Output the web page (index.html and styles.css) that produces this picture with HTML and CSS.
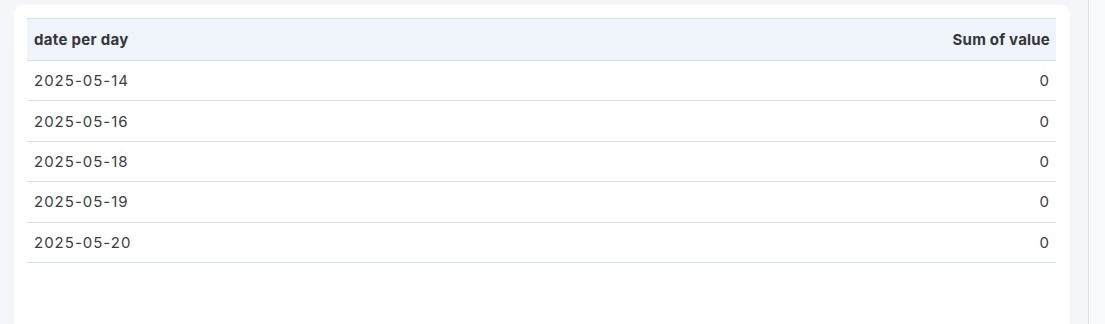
FILE: index.html
```html
<!DOCTYPE html>
<html>
<head>
<meta charset="utf-8">
<link rel="stylesheet" href="styles.css">
</head>
<body>
<div class="page">
  <div class="main">
    <div class="card">
      <table class="grid">
        <thead>
          <tr><th class="left">date per day</th><th class="right">Sum of value</th></tr>
        </thead>
        <tbody>
          <tr><td class="left">2025-05-14</td><td class="right">0</td></tr>
          <tr><td class="left">2025-05-16</td><td class="right">0</td></tr>
          <tr><td class="left">2025-05-18</td><td class="right">0</td></tr>
          <tr><td class="left">2025-05-19</td><td class="right">0</td></tr>
          <tr><td class="left">2025-05-20</td><td class="right">0</td></tr>
        </tbody>
      </table>
    </div>
  </div>
  <div class="side"></div>
</div>
</body>
</html>
```
FILE: styles.css
```css
html, body {
  margin: 0;
  padding: 0;
  height: 100%;
  overflow: hidden;
}
body {
  background: #f5f6fa;
  font-family: Inter, "Noto Sans", sans-serif;
  color: #2f3134;
}
.page {
  display: flex;
  height: 324px;
}
.main {
  width: 1088px;
  padding: 5px 18px 0 14px;
  box-sizing: border-box;
}
.card {
  background: #ffffff;
  border-radius: 9px 9px 0 0;
  height: 319px;
  padding: 13px 14px 0 13px;
  box-sizing: border-box;
}
.side {
  flex: 1;
  border-left: 1px solid #dde1ea;
  background: #f9fafc;
}
.grid {
  width: 100%;
  border-collapse: collapse;
}
.grid th {
  background: #eff3fa;
  font-weight: 700;
  font-size: 15px;
  letter-spacing: 0.3px;
  line-height: 21px;
  padding: 10px 7px;
  border-top: 1px solid #d9dee8;
  border-bottom: 1px solid #d9dee8;
  color: #33363a;
}
.grid th.right {
  padding-right: 6px;
  letter-spacing: 0.2px;
}
.grid td {
  font-size: 15px;
  line-height: 21px;
  padding: 9.2px 7px;
  border-bottom: 1px solid #d9dee8;
  color: #3a3d42;
}
.grid td.left {
  letter-spacing: 1px;
}
.grid td.right {
  padding-right: 7px;
}
.left { text-align: left; }
.right { text-align: right; }
```
